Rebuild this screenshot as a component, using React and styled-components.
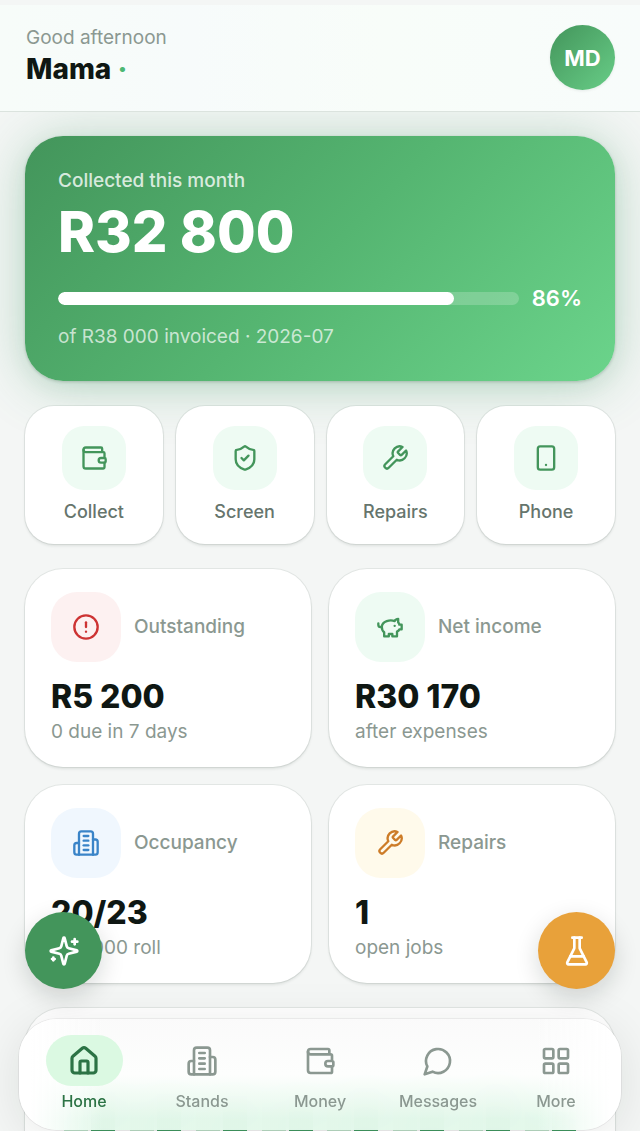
// Dependencies
import React from "react";
import styled, { createGlobalStyle } from "styled-components";
import {
  CircleAlert,
  House,
  LayoutGrid,
  ShieldCheck,
  Smartphone,
  Wallet
} from "lucide-react";

//Constant variables
const INK = "#0f1713";
const MUTED = "#8b9891";
const GREEN = "#43955b";

const GlobalStyle = createGlobalStyle`
  *, *::before, *::after {
    box-sizing: border-box;
  }
  body {
    margin: 0;
    background: #f4f6f5;
    color: ${INK};
    font-family: Inter, "Liberation Sans", sans-serif;
  }
  button {
    font: inherit;
    border: 0;
    padding: 0;
    cursor: pointer;
  }
  a {
    color: inherit;
    text-decoration: none;
  }
`;

// icons
const Icon = ({ size = 24, children }) => (
  <svg
    width={size}
    height={size}
    viewBox="0 0 24 24"
    fill="none"
    stroke="currentColor"
    strokeWidth="2"
    strokeLinecap="round"
    strokeLinejoin="round"
    aria-hidden="true"
  >
    {children}
  </svg>
);

const Wrench = ({ size }) => (
  <Icon size={size}>
    <path d="M14.7 6.3a1 1 0 0 0 0 1.4l1.6 1.6a1 1 0 0 0 1.4 0l3.77-3.77a6 6 0 0 1-7.94 7.94l-6.91 6.91a2.12 2.12 0 0 1-3-3l6.91-6.91a6 6 0 0 1 7.94-7.94l-3.76 3.76z" />
  </Icon>
);

const PiggyBank = ({ size }) => (
  <Icon size={size}>
    <path d="M19 5c-1.5 0-2.8 1.4-3 2-3.5-1.5-11-.3-11 5 0 1.8 0 3 2 4.5V20h4v-2h3v2h4v-4c1-.5 1.7-1 2-2h2v-4h-2c0-1-.5-1.5-1-2V5z" />
    <path d="M2 9v1c0 1.1.9 2 2 2h1" />
    <path d="M16 11h.01" />
  </Icon>
);

const Building = ({ size }) => (
  <Icon size={size}>
    <path d="M6 22V4a2 2 0 0 1 2-2h8a2 2 0 0 1 2 2v18Z" />
    <path d="M6 12H4a2 2 0 0 0-2 2v6a2 2 0 0 0 2 2h2" />
    <path d="M18 9h2a2 2 0 0 1 2 2v9a2 2 0 0 1-2 2h-2" />
    <path d="M10 6h4" />
    <path d="M10 10h4" />
    <path d="M10 14h4" />
    <path d="M10 18h4" />
  </Icon>
);

const Message = ({ size }) => (
  <Icon size={size}>
    <path d="M7.9 20A9 9 0 1 0 4 16.1L2 22Z" />
  </Icon>
);

const Sparkles = ({ size }) => (
  <Icon size={size}>
    <path d="M9.937 15.5A2 2 0 0 0 8.5 14.063l-6.135-1.582a.5.5 0 0 1 0-.962L8.5 9.936A2 2 0 0 0 9.937 8.5l1.582-6.135a.5.5 0 0 1 .963 0L14.063 8.5A2 2 0 0 0 15.5 9.937l6.135 1.581a.5.5 0 0 1 0 .964L15.5 14.063a2 2 0 0 0-1.437 1.437l-1.582 6.135a.5.5 0 0 1-.963 0z" />
    <path d="M20 3v4" />
    <path d="M22 5h-4" />
    <path d="M4 17v2" />
    <path d="M5 18H3" />
  </Icon>
);

const Flask = ({ size }) => (
  <Icon size={size}>
    <path d="M10 2v7.527a2 2 0 0 1-.211.896L4.72 20.55a1 1 0 0 0 .9 1.45h12.76a1 1 0 0 0 .9-1.45l-5.069-10.127A2 2 0 0 1 14 9.527V2" />
    <path d="M8.5 2h7" />
    <path d="M7 16h10" />
  </Icon>
);

// styled-components
const Screen = styled.div`
  height: 100vh;
  padding-top: 5px;
  overflow-y: auto;
  scrollbar-width: none;
`;

const Header = styled.header`
  position: sticky;
  top: 0;
  z-index: 2;
  display: flex;
  justify-content: space-between;
  align-items: flex-start;
  padding: 20px 25px 21px 26px;
  background: linear-gradient(90deg, #f7fcf9, #f7fbfb 30%, #f8fdf9 60%, #f8fcfb);
  border-bottom: 1px solid #dbe3de;
`;

const Greeting = styled.p`
  margin: 0;
  font-size: 19px;
  line-height: 26px;
  color: ${MUTED};
`;

const UserName = styled.h1`
  margin: 0;
  font-size: 28px;
  line-height: 36px;
  font-weight: 800;

  span {
    color: #4cb874;
  }
`;

const Avatar = styled.button`
  width: 65px;
  height: 65px;
  border-radius: 50%;
  background: linear-gradient(135deg, #43955b, #68cd87);
  box-shadow: 0 1px 3px rgba(15, 40, 25, 0.08);
  color: #fff;
  font-size: 22px;
  font-weight: 700;
`;

const Content = styled.main`
  display: flex;
  flex-direction: column;
  gap: 25px;
  padding: 24px 25px 0;
`;

const Hero = styled.section`
  padding: 32px 33px 31px;
  border-radius: 38px;
  background: linear-gradient(135deg, #43955b, #55b571 50%, #6bd48b);
  box-shadow: 0 1px 3px rgba(15, 40, 25, 0.2),
    0 6px 20px rgba(40, 130, 80, 0.08),
    0 4px 56px rgba(50, 145, 90, 0.3);
  color: #fff;
`;

const HeroLabel = styled.p`
  margin: 0;
  font-size: 19px;
  line-height: 26px;
  font-weight: ${props => (props.$light ? 400 : 500)};
  color: rgba(255, 255, 255, ${props => (props.$light ? 0.7 : 0.8)});
`;

const HeroAmount = styled.p`
  margin: 8px 0 21px;
  font-size: 56px;
  line-height: 60px;
  font-weight: 800;
`;

const ProgressRow = styled.div`
  display: flex;
  align-items: center;
  gap: 13px;
  margin-bottom: 11px;
  font-size: 22px;
  line-height: 30px;
  font-weight: 600;
`;

const Track = styled.div`
  flex: 1;
  height: 13px;
  border-radius: 7px;
  background: rgba(255, 255, 255, 0.2);
  overflow: hidden;
`;

const Fill = styled.div`
  height: 100%;
  border-radius: 7px;
  background: #fff;
`;

const Actions = styled.div`
  display: grid;
  grid-template-columns: repeat(4, 1fr);
  gap: 13px;
`;

const cardShadow = `0 0 0 1px rgba(15, 40, 25, 0.07),
  0 2px 3px rgba(15, 40, 25, 0.1)`;

const Action = styled.button`
  display: flex;
  flex-direction: column;
  align-items: center;
  gap: 10px;
  padding: 20px 8px;
  border-radius: 29px;
  background: #fff;
  box-shadow: ${cardShadow};
  color: #66756d;
  font-size: 18px;
  line-height: 24px;
  font-weight: 500;
`;

const IconBox = styled.span`
  display: flex;
  align-items: center;
  justify-content: center;
  flex: none;
  width: ${props => props.$size}px;
  height: ${props => props.$size}px;
  border-radius: ${props => (props.$size > 64 ? 26 : 22)}px;
  background: ${props => props.$bg};
  color: ${props => props.$color};
`;

const Stats = styled.div`
  display: grid;
  grid-template-columns: 1fr 1fr;
  gap: 18px;
`;

const StatCard = styled.article`
  padding: 23px 26px 22px;
  border-radius: 38px;
  background: #fff;
  box-shadow: ${cardShadow};
`;

const StatHead = styled.div`
  display: flex;
  align-items: center;
  gap: 13px;
`;

const StatLabel = styled.h2`
  margin: 0;
  font-size: 19px;
  line-height: 26px;
  font-weight: 500;
  color: ${MUTED};
`;

const StatValue = styled.p`
  margin: 15px 0 2px;
  font-size: 32px;
  line-height: 40px;
  font-weight: 800;
`;

const StatNote = styled.p`
  margin: 0;
  font-size: 19px;
  line-height: 26px;
  color: ${MUTED};
`;

const ChartCard = styled.section`
  display: flex;
  padding: 64px 32px 160px;
  border-radius: 38px;
  background: #fff;
  box-shadow: ${cardShadow};
`;

const BarPair = styled.div`
  flex: 1;
  display: flex;
  align-items: flex-end;
  justify-content: center;
  gap: 3px;
  height: 180px;
`;

const Bar = styled.div`
  width: 24px;
  background: ${props => (props.$paid ? "#43a065" : "#c3e8cf")};
`;

// the two floating buttons sit over the cards
const Fab = styled.button`
  position: fixed;
  bottom: 142px;
  ${props => props.$side}: 25px;
  z-index: 3;
  display: flex;
  align-items: center;
  justify-content: center;
  width: 77px;
  height: 77px;
  border-radius: 50%;
  background: ${props => props.$bg};
  box-shadow: 0 8px 24px rgba(15, 25, 20, 0.16);
  color: #fff;
`;

const TabBar = styled.nav`
  position: fixed;
  left: 19px;
  right: 19px;
  bottom: 1px;
  z-index: 3;
  display: flex;
  padding: 16px 6px 18px;
  border-radius: 38px;
  background: linear-gradient(
      90deg,
      #fff 2%,
      rgba(255, 255, 255, 0) 14%,
      rgba(255, 255, 255, 0) 86%,
      #fff 98%
    ),
    linear-gradient(
      180deg,
      rgba(250, 250, 250, 0.96),
      rgba(253, 254, 253, 0.96) 50%,
      rgba(228, 248, 235, 0.96) 90%
    );
  backdrop-filter: blur(20px);
  box-shadow: 0 0 0 1px rgba(15, 25, 20, 0.06),
    0 8px 50px rgba(15, 25, 20, 0.1);
`;

const Tab = styled.a`
  flex: 1;
  display: flex;
  flex-direction: column;
  align-items: center;
  gap: 4px;
  font-size: 16px;
  line-height: 22px;
  font-weight: 500;
  color: ${props => (props.$active ? "#2c7345" : MUTED)};
`;

const TabPill = styled.span`
  display: flex;
  align-items: center;
  justify-content: center;
  width: 77px;
  height: 51px;
  border-radius: 26px;
  background: ${props => (props.$active ? "#dbf9e2" : "transparent")};
`;

const actions = [
  { label: "Collect", icon: Wallet },
  { label: "Screen", icon: ShieldCheck },
  { label: "Repairs", icon: Wrench },
  { label: "Phone", icon: Smartphone }
];

const stats = [
  {
    label: "Outstanding",
    value: "R5 200",
    note: "0 due in 7 days",
    icon: CircleAlert,
    bg: "#fdf1f1",
    color: "#cd3333"
  },
  {
    label: "Net income",
    value: "R30 170",
    note: "after expenses",
    icon: PiggyBank,
    bg: "#eefbf3",
    color: GREEN
  },
  {
    label: "Occupancy",
    value: "20/23",
    note: "R38 000 roll",
    icon: Building,
    bg: "#f0f7fe",
    color: "#3a84c8"
  },
  {
    label: "Repairs",
    value: "1",
    note: "open jobs",
    icon: Wrench,
    bg: "#fffaeb",
    color: "#cd7c28"
  }
];

// [invoiced, paid]
const months = [
  [150, 160],
  [150, 158],
  [150, 156],
  [150, 156],
  [150, 164],
  [150, 164],
  [150, 168],
  [140, 140]
];

const tabs = [
  { label: "Home", icon: House },
  { label: "Stands", icon: Building },
  { label: "Money", icon: Wallet },
  { label: "Messages", icon: Message },
  { label: "More", icon: LayoutGrid }
];

const App = () => {
  const percent = 86;

  return (
    <Screen>
      <GlobalStyle />
      <Header>
        <div>
          <Greeting>Good afternoon</Greeting>
          <UserName>
            Mama <span>·</span>
          </UserName>
        </div>
        <Avatar type="button">MD</Avatar>
      </Header>

      <Content>
        <Hero>
          <HeroLabel>Collected this month</HeroLabel>
          <HeroAmount>R32 800</HeroAmount>
          <ProgressRow>
            <Track>
              <Fill style={{ width: `${percent}%` }} />
            </Track>
            <span>{percent}%</span>
          </ProgressRow>
          <HeroLabel $light>of R38 000 invoiced · 2026-07</HeroLabel>
        </Hero>

        <Actions>
          {actions.map(({ label, icon: Glyph }) => (
            <Action type="button" key={label}>
              <IconBox $size={64} $bg="#eefbf3" $color={GREEN}>
                <Glyph size={28} />
              </IconBox>
              {label}
            </Action>
          ))}
        </Actions>

        <Stats>
          {stats.map(({ label, value, note, icon: Glyph, bg, color }) => (
            <StatCard key={label}>
              <StatHead>
                <IconBox $size={70} $bg={bg} $color={color}>
                  <Glyph size={28} />
                </IconBox>
                <StatLabel>{label}</StatLabel>
              </StatHead>
              <StatValue>{value}</StatValue>
              <StatNote>{note}</StatNote>
            </StatCard>
          ))}
        </Stats>

        <ChartCard>
          {months.map(([invoiced, paid], i) => (
            <BarPair key={i}>
              <Bar style={{ height: invoiced }} />
              <Bar $paid style={{ height: paid }} />
            </BarPair>
          ))}
        </ChartCard>
      </Content>

      <Fab type="button" $side="left" $bg={GREEN} aria-label="Assistant">
        <Sparkles size={32} />
      </Fab>
      <Fab type="button" $side="right" $bg="#e8a13a" aria-label="Lab">
        <Flask size={32} />
      </Fab>

      <TabBar>
        {tabs.map(({ label, icon: Glyph }, i) => (
          <Tab href={`#${label.toLowerCase()}`} $active={i === 0} key={label}>
            <TabPill $active={i === 0}>
              <Glyph size={32} strokeWidth={i === 0 ? 2.4 : 2} />
            </TabPill>
            {label}
          </Tab>
        ))}
      </TabBar>
    </Screen>
  );
};

export default App;
